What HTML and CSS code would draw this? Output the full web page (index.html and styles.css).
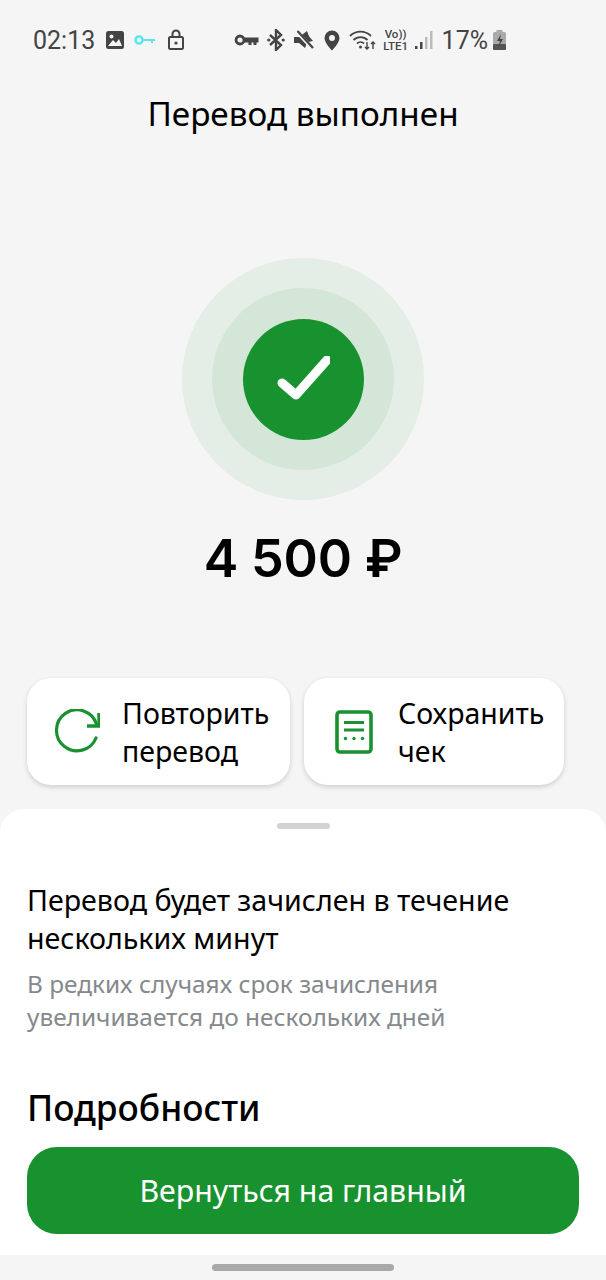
FILE: index.html
```html
<!DOCTYPE html>
<html lang="ru">
<head>
  <meta charset="UTF-8">
  <meta name="viewport" content="width=device-width, initial-scale=1.0">
  <title>Перевод выполнен</title>
  <link rel="stylesheet" href="styles.css">
</head>
<body>
  <div class="statusbar">
    <div class="status-left">
      <span class="clock">02:13</span>
      <svg width="20" height="20" viewBox="0 0 20 20"><rect x="1" y="1" width="18" height="18" rx="2.500" fill="#444"/><circle cx="6.500" cy="6.500" r="2" fill="#f5f5f5"/><path d="M3 16l5-6 3 3 3-4 3 7z" fill="#f5f5f5"/></svg>
      <svg width="22" height="12" viewBox="0 0 22 12"><circle cx="5" cy="6" r="3.500" fill="none" stroke="#5ce6ee" stroke-width="2.600"/><path d="M8 6h13M18 6v3" fill="none" stroke="#5ce6ee" stroke-width="2"/></svg>
      <svg class="ic-lock" width="18" height="22" viewBox="0 0 18 22"><rect x="2" y="8" width="14" height="12" rx="1.500" fill="none" stroke="#444" stroke-width="2"/><path d="M5.500 8V5a3.500 3.500 0 0 1 7 0v3" fill="none" stroke="#444" stroke-width="2"/><circle cx="9" cy="14" r="1.600" fill="#444"/></svg>
    </div>
    <div class="status-right">
      <svg width="25" height="14" viewBox="0 0 25 14"><circle cx="6" cy="7" r="4" fill="none" stroke="#444" stroke-width="2.800"/><path d="M9 4.500h15.500v5h-2V12h-3V9.500h-2V12h-3V9.500H9z" fill="#444"/></svg>
      <svg class="ic-bt" width="18" height="22" viewBox="0 0 18 22"><path d="M3 6l11 10-5 5V1l5 5L3 16" fill="none" stroke="#444" stroke-width="2.400"/><circle cx="1.800" cy="11" r="1.600" fill="#444"/><circle cx="16.200" cy="11" r="1.600" fill="#444"/></svg>
      <svg width="20" height="20" viewBox="0 0 20 20"><path d="M0 7h5l8-6 3 8-3 4-2 5-6-5H0z" fill="#444"/><path d="M13 4l6 7-5 1z" fill="#444"/><path d="M2 1l17 18" stroke="#f5f5f5" stroke-width="3.600"/><path d="M3.500 1l15.500 17" stroke="#444" stroke-width="2.200"/></svg>
      <svg class="ic-pin" width="16" height="21" viewBox="0 0 16 21"><path fill-rule="evenodd" d="M8 .5A7.500 7.500 0 0 1 15.500 8C15.500 13 8 20.500 8 20.500S.5 13 .5 8A7.500 7.500 0 0 1 8 .5zM8 5a3 3 0 1 0 0 6 3 3 0 0 0 0-6z" fill="#444"/></svg>
      <svg width="27" height="22" viewBox="0 0 27 22"><path d="M1 7a15 15 0 0 1 21 0M4.500 11a10 10 0 0 1 14 0M8 14.500a5 5 0 0 1 7 0" fill="none" stroke="#444" stroke-width="1.800"/><circle cx="11.500" cy="18" r="1.500" fill="#444"/><path d="M18 13v7m-2-2l2 2 2-2M24 20v-7m-2 2l2-2 2 2" fill="none" stroke="#444" stroke-width="1.400"/></svg>
      <span class="lte"><span>Vo))</span><span>LTE1</span></span>
      <svg class="signal" width="19" height="22" viewBox="0 0 19 22"><rect x="1" y="17" width="2.500" height="3" fill="#444"/><rect x="6" y="13" width="2.500" height="7" fill="#444"/><rect x="11" y="8" width="2.500" height="12" fill="#bbb"/><rect x="16" y="2" width="2.500" height="18" fill="#bbb"/></svg>
      <span class="battery-pct">17%</span>
      <svg width="15" height="22" viewBox="0 0 15 22"><rect x="4.500" y="1" width="6" height="3" fill="#aaa"/><rect x="1" y="3" width="13" height="18" rx="1.500" fill="#aaa"/><rect x="1" y="15" width="13" height="6" rx="1" fill="#555"/><path d="M9 5l-4 7h3l-1.500 6 4.500-8H8z" fill="#444"/></svg>
    </div>
  </div>

  <h1 class="title">Перевод выполнен</h1>

  <div class="result">
    <div class="ring-outer">
      <div class="ring-mid">
        <div class="ring-inner">
          <svg width="54" height="46" viewBox="0 0 54 46"><path d="M6 27l14 12L51 4" fill="none" stroke="#fff" stroke-width="9" stroke-linecap="round" stroke-linejoin="round"/></svg>
        </div>
      </div>
    </div>
    <div class="amount">4 500 ₽</div>
  </div>

  <div class="actions">
    <div class="action action-repeat">
      <svg width="46" height="46" viewBox="0 0 46 46"><path d="M42.500 15A20.500 20.500 0 1 0 42 29" fill="none" stroke="#1a9130" stroke-width="3.200" stroke-linecap="round"/><path d="M33 17H45V4" fill="none" stroke="#1a9130" stroke-width="3.400"/></svg>
      <span>Повторить перевод</span>
    </div>
    <div class="action action-save">
      <svg width="38" height="44" viewBox="0 0 38 44"><rect x="2" y="2" width="34" height="40" rx="3" fill="none" stroke="#1a9130" stroke-width="3.600"/><path d="M9 12.500h20M9 20h20" stroke="#1a9130" stroke-width="3.200"/><circle cx="10.500" cy="28.500" r="1.700" fill="#1a9130"/><circle cx="19" cy="28.500" r="1.700" fill="#1a9130"/><circle cx="27.500" cy="28.500" r="1.700" fill="#1a9130"/></svg>
      <span>Сохранить чек</span>
    </div>
  </div>

  <div class="sheet">
    <div class="handle"></div>
    <p class="notice">Перевод будет зачислен в течение нескольких минут</p>
    <p class="hint">В редких случаях срок зачисления увеличивается до нескольких дней</p>
    <h2 class="details">Подробности</h2>
    <a class="home-btn" href="#">Вернуться на главный</a>
  </div>

  <div class="navbar"><div class="nav-pill"></div></div>
</body>
</html>
```

FILE: styles.css
```css
* {
  box-sizing: border-box;
}

html, body {
  height: 100%;
}

body {
  margin: 0;
  width: 606px;
  height: 1280px;
  overflow: hidden;
  display: flex;
  flex-direction: column;
  background-color: #f5f5f5;
  color: #000;
  font-family: "Noto Sans", "Open Sans", sans-serif;
}

.statusbar {
  height: 80px;
  padding: 0 99px 0 33px;
  display: flex;
  justify-content: space-between;
  align-items: center;
  color: #444;
  font-family: Roboto, sans-serif;
}

.status-left, .status-right {
  display: flex;
  align-items: center;
}

.status-left {
  gap: 9px;
}

.status-right {
  gap: 8px;
}

.clock {
  font-size: 25px;
  margin-right: 1px;
}

.ic-lock {
  margin-left: 2px;
}

.ic-bt {
  margin-right: 1px;
}

.ic-pin {
  margin: 0 1px 0 2px;
}

.lte {
  width: 26px;
  margin-left: -1px;
  display: flex;
  flex-direction: column;
  align-items: center;
  font-size: 11.5px;
  line-height: 12px;
  font-weight: 500;
}

.signal {
  margin-left: -3px;
}

.battery-pct {
  font-size: 25px;
  margin: 0 -4px 0 1px;
}

.title {
  margin: 15px 0 0;
  text-align: center;
  font-size: 33.3px;
  line-height: 36px;
  font-weight: 400;
}

.result {
  margin-top: 127px;
  display: flex;
  flex-direction: column;
  align-items: center;
}

.ring-outer, .ring-mid, .ring-inner {
  display: flex;
  justify-content: center;
  align-items: center;
  border-radius: 50%;
}

.ring-outer {
  width: 242px;
  height: 242px;
  background-color: #e4ede6;
}

.ring-mid {
  width: 182px;
  height: 182px;
  background-color: #d3e6d7;
}

.ring-inner {
  width: 121px;
  height: 121px;
  background-color: #18922f;
}

.amount {
  margin-top: 24px;
  font-family: Inter, "Noto Sans", sans-serif;
  font-size: 52px;
  line-height: 70px;
  font-weight: 600;
  letter-spacing: -0.2px;
}

.actions {
  margin: 84px 42px 0 27px;
  display: flex;
  gap: 14px;
}

.action {
  height: 107px;
  display: flex;
  align-items: center;
  background-color: #fff;
  border-radius: 24px;
  box-shadow: 0 2px 5px rgba(0, 0, 0, 0.16);
  font-size: 28.5px;
  line-height: 38px;
}

.action-repeat {
  width: 263px;
  padding-left: 27px;
  gap: 22px;
}

.action-repeat span {
  width: 160px;
}

.action-save {
  width: 260px;
  padding-left: 31px;
  gap: 25px;
}

.action-save span {
  width: 160px;
}

.sheet {
  margin-top: 24px;
  height: 446px;
  padding: 14px 27px 0;
  background-color: #fff;
  border-radius: 24px 24px 0 0;
}

.handle {
  width: 53px;
  height: 6px;
  margin: 0 auto;
  border-radius: 3px;
  background-color: #d2d2d2;
}

.notice {
  margin: 52px 0 0;
  font-size: 28.6px;
  line-height: 38px;
}

.hint {
  margin: 10px 0 0;
  font-size: 24.4px;
  line-height: 33px;
  color: #85898d;
}

.details {
  margin: 52px 0 0;
  font-size: 35.3px;
  line-height: 44px;
  font-weight: 500;
}

.home-btn {
  display: flex;
  justify-content: center;
  align-items: center;
  height: 87px;
  margin-top: 18px;
  border-radius: 30px;
  background-color: #18922f;
  color: #fff;
  font-size: 30.3px;
  text-decoration: none;
}

.navbar {
  flex-grow: 1;
  display: flex;
  justify-content: center;
  padding-top: 9px;
}

.nav-pill {
  width: 182px;
  height: 7px;
  border-radius: 4px;
  background-color: #a9a9a9;
}
```
